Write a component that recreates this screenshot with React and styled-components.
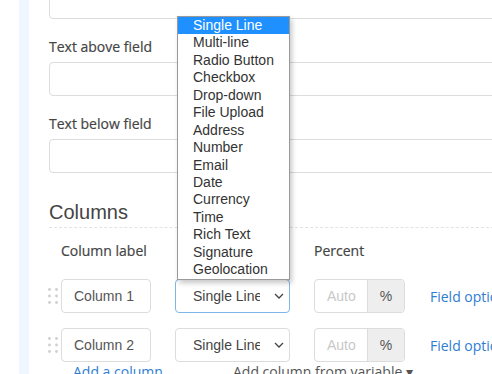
import styled, { createGlobalStyle } from "styled-components";

const GlobalStyle = createGlobalStyle`
	html, body {
		margin: 0;
		padding: 0;
		background: #fff;
		overflow: hidden;
	}
	body {
		font-family: "Open Sans", "Noto Sans", sans-serif;
	}
`;

const fieldTypes = [
	"Single Line",
	"Multi-line",
	"Radio Button",
	"Checkbox",
	"Drop-down",
	"File Upload",
	"Address",
	"Number",
	"Email",
	"Date",
	"Currency",
	"Time",
	"Rich Text",
	"Signature",
	"Geolocation",
];

const columns = [
	{ label: "Column 1", focused: true },
	{ label: "Column 2", focused: false },
];

const DragHandle = () => (
	<svg width="10" height="16" viewBox="0 0 10 16">
		{[1.5, 8.5].map((cx) =>
			[1.5, 8, 14.5].map((cy) => (
				<circle key={cx + "-" + cy} cx={cx} cy={cy} r="1.4" fill="#cfcfcf" />
			))
		)}
	</svg>
);

const Chevron = () => (
	<svg width="10" height="6" viewBox="0 0 10 6">
		<polyline
			points="1,1 5,5 9,1"
			fill="none"
			stroke="#444"
			strokeWidth="1.3"
		/>
	</svg>
);

const App = () => {
	return (
		<Page>
			<GlobalStyle />
			<Gutter />
			<Strip />
			<Content>
				<TopInput />
				<Label>Text above field</Label>
				<TextInput />
				<Label>Text below field</Label>
				<TextInput />

				<Heading>Columns</Heading>

				<Row $header>
					<HandleSlot />
					<Cells>
						<ColHeader>Column label</ColHeader>
						<ColHeader />
						<ColHeader>Percent</ColHeader>
						<span />
					</Cells>
				</Row>

				{columns.map((col) => (
					<Row key={col.label}>
						<HandleSlot>
							<DragHandle />
						</HandleSlot>
						<Cells>
							<LabelInput>{col.label}</LabelInput>
							<Select $focused={col.focused}>
								<SelectValue>Single Line</SelectValue>
								<Chevron />
							</Select>
							<PercentGroup>
								<PercentInput>Auto</PercentInput>
								<Addon>%</Addon>
							</PercentGroup>
							<Link>Field options</Link>
						</Cells>
					</Row>
				))}

				<AddRow>
					<AddLink>Add a column</AddLink>
					<VariableLink>Add column from variable ▾</VariableLink>
				</AddRow>

				<Menu>
					{fieldTypes.map((type, i) => (
						<MenuItem key={type} $active={i === 0}>
							{type}
						</MenuItem>
					))}
				</Menu>
			</Content>
		</Page>
	);
};

export default App;

const Page = styled.div`
	display: flex;
	width: 492px;
	height: 374px;
	overflow: hidden;
	position: relative;
`;

const Gutter = styled.div`
	width: 19px;
	flex-shrink: 0;
	background: #fff;
`;

const Strip = styled.div`
	width: 10px;
	flex-shrink: 0;
	background: #f0f6ff;
`;

const Content = styled.div`
	flex: 1;
	padding-left: 20px;
	display: flex;
	flex-direction: column;
	align-items: flex-start;
`;

const TextInput = styled.div`
	width: 460px;
	height: 34px;
	box-sizing: border-box;
	border: 1px solid #dcdcdc;
	border-radius: 4px;
	background: #fff;
	flex-shrink: 0;
`;

const TopInput = styled(TextInput)`
	margin-top: -15px;
`;

const Label = styled.div`
	margin-top: 18px;
	margin-bottom: 5px;
	line-height: 20px;
	font-size: 14px;
	color: #444;
	-webkit-text-stroke: 0.2px #444;
`;

const Heading = styled.div`
	margin-top: 27px;
	width: 460px;
	padding-bottom: 3px;
	border-bottom: 1px dashed #e3e3e3;
	font-family: "Liberation Sans", Arial, sans-serif;
	font-size: 20px;
	line-height: 24px;
	color: #444;
`;

const Row = styled.div`
	display: flex;
	align-items: center;
	margin-top: ${(p) => (p.$header ? "13px" : "15px")};
	margin-bottom: ${(p) => (p.$header ? "3px" : "0")};
`;

const HandleSlot = styled.div`
	width: 12px;
	display: flex;
	align-items: center;
	margin-left: -1px;
	margin-right: 1px;
`;

const Cells = styled.div`
	display: grid;
	grid-template-columns: 90px 115px 91px auto;
	column-gap: 24px;
	align-items: center;
`;

const ColHeader = styled.div`
	font-size: 14px;
	line-height: 20px;
	color: #444;
	-webkit-text-stroke: 0.2px #444;
	white-space: nowrap;
`;

const boxBase = `
	box-sizing: border-box;
	height: 34px;
	border: 1px solid #dcdcdc;
	border-radius: 4px;
	background: #fff;
	font-family: "Liberation Sans", Arial, sans-serif;
	font-size: 14px;
	display: flex;
	align-items: center;
`;

const LabelInput = styled.div`
	${boxBase}
	padding-left: 12px;
	color: #555;
`;

const Select = styled.div`
	${boxBase}
	border-color: ${(p) => (p.$focused ? "#7fb6e8" : "#dcdcdc")};
	padding: 0 5px 0 17px;
	color: #444;
	gap: 14px;
`;

const SelectValue = styled.span`
	flex: 1;
	overflow: hidden;
	white-space: nowrap;
`;

const PercentGroup = styled.div`
	${boxBase}
	overflow: hidden;
	align-items: stretch;
`;

const PercentInput = styled.div`
	flex: 1;
	display: flex;
	align-items: center;
	padding-left: 12px;
	color: #c8c8c8;
`;

const Addon = styled.div`
	width: 36px;
	display: flex;
	align-items: center;
	justify-content: center;
	background: #eee;
	border-left: 1px solid #dcdcdc;
	color: #555;
`;

const Link = styled.a`
	font-size: 14px;
	color: #2d7dd2;
	white-space: nowrap;
	margin-left: 1px;
`;

const AddRow = styled.div`
	display: flex;
	padding-left: 24px;
	line-height: 20px;
	font-size: 14px;
	white-space: nowrap;
`;

const AddLink = styled.a`
	width: 160px;
	color: #2d7dd2;
`;

const VariableLink = styled.span`
	color: #555;
`;

const Menu = styled.div`
	position: absolute;
	left: 177px;
	top: 16px;
	width: 113px;
	box-sizing: border-box;
	border: 1px solid #9a9a9a;
	background: #fff;
	box-shadow: 2px 3px 5px rgba(0, 0, 0, 0.22);
	font-family: "Liberation Sans", Arial, sans-serif;
	font-size: 14px;
`;

const MenuItem = styled.div`
	height: 17.45px;
	line-height: 17.45px;
	padding-left: 15px;
	white-space: nowrap;
	color: ${(p) => (p.$active ? "#fff" : "#333")};
	background: ${(p) => (p.$active ? "#1e90ff" : "transparent")};
`;
